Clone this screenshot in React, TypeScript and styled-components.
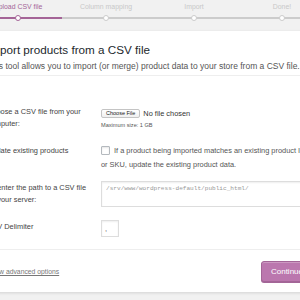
import React from "react";
import styled, { createGlobalStyle } from "styled-components";

const PURPLE = "#a46497";
const GREY = "#ccc";

const GlobalStyle = createGlobalStyle`
  html, body { margin: 0; padding: 0; }
  body {
    background: #f1f1f1;
    font-family: "Liberation Sans", Arial, sans-serif;
    width: 300px;
    height: 300px;
    overflow: hidden;
  }
`;

const Wrap = styled.div`
  width: 352px;
  margin-left: -26px;
`;

const Steps = styled.ol`
  display: flex;
  list-style: none;
  margin: 0;
  padding: 2px 0 10px;
`;

const Step = styled.li<{ $active?: boolean }>`
  flex: 0 0 88px;
  display: flex;
  flex-direction: column;
  align-items: center;
  gap: 3px;
  color: ${(p) => (p.$active ? PURPLE : "#c8c8c8")};
`;

const StepLabel = styled.span`
  font-size: 6.9px;
  line-height: 10px;
  white-space: nowrap;
`;

const Track = styled.div<{ $active?: boolean }>`
  align-self: stretch;
  height: 6px;
  display: flex;
  justify-content: center;
  background: linear-gradient(
      ${(p) => (p.$active ? PURPLE : GREY)},
      ${(p) => (p.$active ? PURPLE : GREY)}
    )
    center / 100% 2px no-repeat;
`;

const Dot = styled.span<{ $active?: boolean }>`
  width: 6px;
  height: 6px;
  box-sizing: border-box;
  border: 1.5px solid ${(p) => (p.$active ? PURPLE : GREY)};
  border-radius: 50%;
  background: #fff;
`;

const Card = styled.section`
  background: #fff;
  box-shadow: 0 1px 3px rgba(0, 0, 0, 0.13);
`;

const Header = styled.header`
  padding: 12px 13px 3px;
  border-bottom: 1px solid #eee;
`;

const Title = styled.h2`
  margin: 0 0 3px;
  font-size: 11.7px;
  line-height: 14px;
  font-weight: 400;
  color: #23282d;
  white-space: nowrap;
`;

const Lead = styled.p`
  margin: 0;
  font-size: 8.5px;
  line-height: 12px;
  color: #555;
  white-space: nowrap;
`;

const Form = styled.div`
  padding: 0 13px 12px;
`;

const Row = styled.div<{ $top: number }>`
  display: grid;
  grid-template-columns: 114px 1fr;
  padding-top: ${(p) => p.$top}px;
`;

const Label = styled.label`
  padding: 1px 10px 0 0;
  font-size: 7.4px;
  line-height: 12px;
  color: #444;
`;

const Field = styled.div`
  font-size: 7.4px;
  color: #555;
`;

const FileLine = styled.div`
  display: flex;
  align-items: center;
  gap: 3px;
  height: 12px;
  padding-top: 2px;
  color: #333;
`;

const ChooseButton = styled.span`
  display: inline-flex;
  align-items: center;
  height: 9px;
  box-sizing: border-box;
  padding: 0 4px;
  border: 1px solid #c4c4c4;
  border-radius: 2px;
  background: linear-gradient(#fff, #f0f0f0);
  font-size: 5.5px;
  color: #222;
`;

const Hint = styled.div`
  font-size: 5.6px;
  line-height: 12px;
  color: #555;
`;

const CheckText = styled.div`
  line-height: 14px;
`;

const Check = styled.span`
  display: inline-block;
  width: 9px;
  height: 9px;
  box-sizing: border-box;
  margin-right: 4px;
  vertical-align: -2px;
  border: 1px solid #b4b9be;
  border-radius: 1px;
  background: #fff;
  box-shadow: inset 0 1px 2px rgba(0, 0, 0, 0.1);
`;

const PathInput = styled.input`
  display: block;
  width: 100%;
  height: 26px;
  box-sizing: border-box;
  margin: 0;
  padding: 3px 4px 14px;
  border: 1px solid #ddd;
  border-radius: 0;
  box-shadow: inset 0 1px 2px rgba(0, 0, 0, 0.07);
  font-family: "Liberation Mono", monospace;
  font-size: 6.1px;
  line-height: 7px;
  outline: none;
  &::placeholder { color: #999; }
`;

const SmallInput = styled.input`
  display: block;
  width: 18px;
  height: 17px;
  box-sizing: border-box;
  margin: 0;
  padding: 0 3px;
  border: 1px solid #ddd;
  border-radius: 0;
  box-shadow: inset 0 1px 2px rgba(0, 0, 0, 0.07);
  font-family: "Liberation Sans", Arial, sans-serif;
  font-size: 7.4px;
  color: #555;
  outline: none;
`;

const Footer = styled.footer`
  display: flex;
  align-items: center;
  justify-content: space-between;
  padding: 11px 13px 10px;
  border-top: 1px solid #eee;
`;

const AdvancedLink = styled.a`
  font-size: 6.8px;
  color: #777;
  text-decoration: underline;
  cursor: pointer;
`;

const ContinueButton = styled.button`
  height: 21px;
  padding: 0 9px;
  border: 1px solid #a36597;
  border-radius: 3px;
  background: #bb77ae;
  box-shadow: inset 0 1px 0 rgba(255, 255, 255, 0.25), 0 1px 0 #a36597;
  font-family: "Liberation Sans", Arial, sans-serif;
  font-size: 8px;
  color: #fff;
`;

const steps = ["Upload CSV file", "Column mapping", "Import", "Done!"];

export default function App() {
  return (
    <>
      <GlobalStyle />
      <Wrap>
        <Steps>
          {steps.map((s, i) => (
            <Step key={s} $active={i === 0}>
              <StepLabel>{s}</StepLabel>
              <Track $active={i === 0}>
                <Dot $active={i === 0} />
              </Track>
            </Step>
          ))}
        </Steps>
        <Card>
          <Header>
            <Title>Import products from a CSV file</Title>
            <Lead>
              This tool allows you to import (or merge) product data to your store from a CSV file.
            </Lead>
          </Header>
          <Form>
            <Row $top={29}>
              <Label>Choose a CSV file from your computer:</Label>
              <Field>
                <FileLine>
                  <ChooseButton>Choose File</ChooseButton>
                  No file chosen
                </FileLine>
                <Hint>Maximum size: 1 GB</Hint>
              </Field>
            </Row>
            <Row $top={13}>
              <Label>Update existing products</Label>
              <Field>
                <CheckText>
                  <Check />
                  If a product being imported matches an existing product ID or SKU, update the
                  existing product data.
                </CheckText>
              </Field>
            </Row>
            <Row $top={9}>
              <Label>Or enter the path to a CSV file on your server:</Label>
              <Field>
                <PathInput placeholder="/srv/www/wordpress-default/public_html/" />
              </Field>
            </Row>
            <Row $top={13}>
              <Label>CSV Delimiter</Label>
              <Field>
                <SmallInput defaultValue="," />
              </Field>
            </Row>
          </Form>
          <Footer>
            <AdvancedLink>Show advanced options</AdvancedLink>
            <ContinueButton>Continue</ContinueButton>
          </Footer>
        </Card>
      </Wrap>
    </>
  );
}
